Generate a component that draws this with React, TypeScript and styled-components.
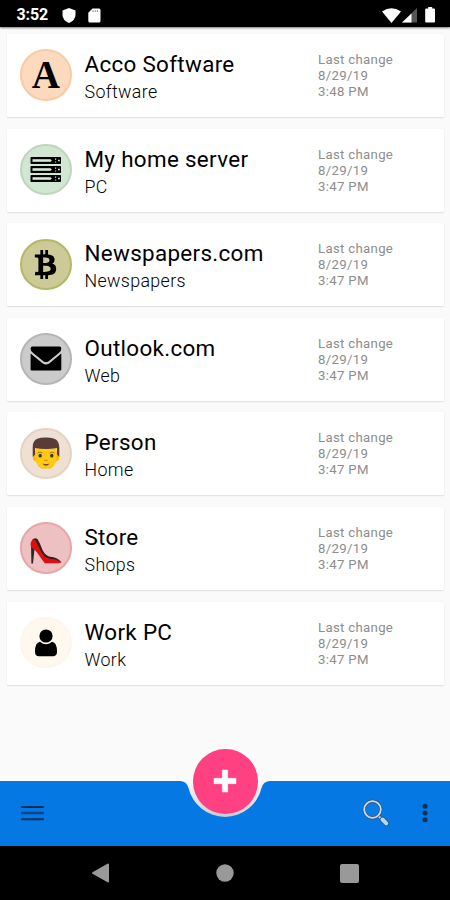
import React from "react";
import styled, { createGlobalStyle } from "styled-components";
import { FaBtc } from "react-icons/fa";

const GlobalStyle = createGlobalStyle`
  * { box-sizing: border-box; }
  html, body { margin: 0; padding: 0; background: #fafafa; }
  body { font-family: Roboto, "Liberation Sans", sans-serif; color: #000; }
`;

const Screen = styled.div`
  width: 450px;
  height: 900px;
  display: flex;
  flex-direction: column;
  background: #fafafa;
  overflow: hidden;
`;

const StatusBar = styled.header`
  height: 27px;
  flex: none;
  display: flex;
  align-items: center;
  padding: 3px 15px 0 16.5px;
  background: #000;
  color: #fff;
  box-shadow: 0 1px 2px rgba(0, 0, 0, 0.5);
`;

const Clock = styled.span`
  width: 45px;
  font-size: 16px;
  font-weight: 700;
  line-height: 18px;
  letter-spacing: -0.1px;
`;

const StatusIcons = styled.div<{ $right?: boolean }>`
  display: flex;
  align-items: center;
  gap: ${(p) => (p.$right ? "0" : "12px")};
  margin-left: ${(p) => (p.$right ? "auto" : "0")};
  svg { display: block; }
`;

const List = styled.main`
  flex: 1;
  min-height: 0;
  display: flex;
  flex-direction: column;
  gap: 11.6px;
  padding: 7px 6px 0 7.4px;
`;

const Card = styled.article`
  height: 83px;
  flex: none;
  display: flex;
  align-items: flex-start;
  padding-left: 12.8px;
  background: #fff;
  border-radius: 1px;
  box-shadow: 0 1px 1.5px rgba(0, 0, 0, 0.1), 0 0 1.5px rgba(0, 0, 0, 0.05);
`;

const Avatar = styled.div<{ $fill: string; $ring: string }>`
  width: 51.4px;
  height: 51.4px;
  flex: none;
  display: flex;
  align-items: center;
  justify-content: center;
  margin-top: 15.4px;
  border-radius: 50%;
  border: 2px solid ${(p) => p.$ring};
  background: ${(p) => p.$fill};
  svg { display: block; }
`;

const Letter = styled.span`
  padding-bottom: 1px;
  font: 700 39px/38px "Liberation Serif", serif;
`;

const Names = styled.div`
  width: 246.4px;
  flex: none;
  padding: 17px 0 0 12.9px;
`;

const Title = styled.h2`
  margin: 0;
  font-size: 22.4px;
  line-height: 27px;
  font-weight: 400;
  letter-spacing: 0.33px;
  white-space: nowrap;
`;

const Category = styled.p`
  margin: 1px 0 0;
  font-size: 17.8px;
  line-height: 25px;
  font-weight: 300;
  letter-spacing: 0.37px;
  color: #000;
`;

const Changed = styled.div`
  padding-top: 18px;
  font-size: 13.2px;
  line-height: 16px;
  letter-spacing: 0.32px;
  color: #8d8d8d;
  white-space: pre-line;
`;

const BottomBar = styled.footer`
  position: relative;
  height: 65px;
  flex: none;
  display: flex;
  align-items: center;
  padding: 0 22px 1px 21px;
  background: #0578e4;
  svg { display: block; }
`;

const IconButton = styled.button<{ $push?: boolean; $gap?: number }>`
  display: flex;
  padding: 0;
  border: 0;
  background: none;
  margin-left: ${(p) => (p.$push ? "auto" : `${p.$gap ?? 0}px`)};
`;

const Cradle = styled.div`
  position: absolute;
  left: 177px;
  top: -1px;
`;

const AddButton = styled.button`
  position: absolute;
  left: 193px;
  top: -32px;
  width: 64.5px;
  height: 64.5px;
  display: flex;
  align-items: center;
  justify-content: center;
  padding: 0;
  border: 0;
  border-radius: 50%;
  background: #ff4081;
`;

const NavBar = styled.nav`
  height: 54px;
  flex: none;
  display: flex;
  align-items: center;
  justify-content: space-between;
  padding: 0 91px;
  background: #000;
  svg { display: block; }
`;

const ServerIcon = () => (
  <svg width="32" height="26" viewBox="0 0 32 26">
    {[0, 9, 18].map((y) => (
      <g key={y} transform={`translate(0 ${y})`}>
        <rect x="0.5" y="0" width="30.500" height="7" rx="0.7" fill="#000" />
        <rect x="2.5" y="2.2" width="18" height="2.6" fill="#d5e9d3" />
        <path d="M20 2.200l2 1.300-2 1.300zM25 1.600h1.200v1.200H25zM25 4.400h1.200v1.200H25zM28 2.800h1.800v1.500H28z" fill="#d5e9d3" />
      </g>
    ))}
  </svg>
);

const MailIcon = () => (
  <svg width="32" height="25" viewBox="0 0 32 25">
    <path d="M2.500 0.500h27Q31.300.500 31.300 2.700 31.300 5.300 28.800 7.100L18.600 15.200Q16 17 13.400 15.200L3.200 7.100Q.600 5.200.600 2.700.600.500 2.500.500z" />
    <path d="M.600 7.600l12.200 9.900q3.200 2.200 6.400 0l12.100-9.900v15.900q0 1-1 1H1.600q-1 0-1-1z" />
  </svg>
);

const FaceIcon = () => (
  <svg width="28" height="32" viewBox="0 0 28 32">
    <path d="M1 14h26v8.500q-1 1.500-3 2Q22.500 29 18.500 31.500h-9Q5.500 29 4 24.500q-2-.5-3-2z" fill="#fdb900" />
    <path d="M3.500 9h21v14q-1.500 5-6 7.500h-9Q5 28 3.500 23z" fill="#ffcb16" />
    <path d="M.7 20V9.500Q1 3 6 1.500 8.500.3 14 .4q6-.2 9 1.600 4 2 4.300 8V20l-2.300-2.500V11q-11 1.800-22 0v6.500z" fill="#593b38" />
    <path d="M5.500 16q2.500-2 5 0M17.500 16q2.500-2 5 0" fill="none" stroke="#a3761f" strokeWidth="1" />
    <ellipse cx="8.200" cy="18.700" rx="1.700" ry="1.900" fill="#40312c" />
    <ellipse cx="19.800" cy="18.700" rx="1.700" ry="1.900" fill="#40312c" />
    <path d="M12.500 23q1.500 1 3 0" fill="none" stroke="#e08d00" strokeWidth="1.200" />
    <path d="M10.500 26.600q3.500 1 7 0-1.100 2.200-3.500 2.200t-3.500-2.200z" fill="#795022" />
  </svg>
);

const ShoeIcon = () => (
  <svg width="32" height="31" viewBox="0 0 32 31">
    <path d="M1 12.500L4.500 16 3 30.500H1.400z" fill="#302626" />
    <path d="M2 7Q4.500 4 7.500 6 10.500 11 12.500 17q3 6.500 9.500 7 5 .500 9.500 5.200L27 29.500 14 24 5 10z" fill="#302020" />
    <path d="M.700 13Q0 8.500 3 6.500 5.500 6 6.500 9.500L11.500 19.500Q14.500 25.500 20 25.800q6 0 11.300 3.300-1 1.100-3 1.100H14.800Q11 25.500 8.500 21.500 5 16.500 3.200 16z" fill="#e10c10" />
  </svg>
);

const UserIcon = () => (
  <svg width="24" height="28" viewBox="0 0 24 28">
    <circle cx="12" cy="7" r="6.600" />
    <path d="M6 12.700Q12 18 18 12.700 23 13.500 23 22.500q0 4.800-4 4.800H5q-4 0-4-4.800 0-9 5-9.800z" />
  </svg>
);

interface Entry {
  title: string;
  category: string;
  time: string;
  fill: string;
  ring: string;
  icon: React.ReactNode;
}

const entries: Entry[] = [
  { title: "Acco Software", category: "Software", time: "3:48 PM", fill: "#fdd9bd", ring: "#f8cba6", icon: <Letter>A</Letter> },
  { title: "My home server", category: "PC", time: "3:47 PM", fill: "#d2e7d1", ring: "#bed6be", icon: <ServerIcon /> },
  { title: "Newspapers.com", category: "Newspapers", time: "3:47 PM", fill: "#cccb98", ring: "#b4b767", icon: <FaBtc size={29} /> },
  { title: "Outlook.com", category: "Web", time: "3:47 PM", fill: "#cbcbcb", ring: "#b5b5b5", icon: <MailIcon /> },
  { title: "Person", category: "Home", time: "3:47 PM", fill: "#eee1d4", ring: "#e5d3c1", icon: <FaceIcon /> },
  { title: "Store", category: "Shops", time: "3:47 PM", fill: "#edc0c1", ring: "#e6a6a8", icon: <ShoeIcon /> },
  { title: "Work PC", category: "Work", time: "3:47 PM", fill: "#fef8ee", ring: "#fdf6eb", icon: <UserIcon /> },
];

export default function App() {
  return (
    <Screen>
      <GlobalStyle />
      <StatusBar>
        <Clock>3:52</Clock>
        <StatusIcons>
          <svg width="14" height="15" viewBox="0 0 14 15">
            <path d="M7 0l6.500 2.500V7q0 5-6.500 8Q.5 12 .5 7V2.500z" fill="#fff" />
          </svg>
          <svg width="13" height="15" viewBox="0 0 13 15">
            <path d="M4.500.5H11q1.500 0 1.500 1.500v11q0 1.500-1.500 1.500H1.800Q.3 14.500.3 13V4.700z" fill="#fff" />
            <path d="M5 2.300v1.600M7.200 2.300v1.600M9.400 2.300v1.600" stroke="#777" strokeWidth="1" />
          </svg>
        </StatusIcons>
        <StatusIcons $right>
          <svg width="19" height="15" viewBox="0 0 19 15">
            <path d="M0 3.500q9.500-6.500 19 0L9.500 15z" fill="#fff" />
          </svg>
          <svg width="17" height="15" viewBox="0 0 17 15">
            <path d="M16 0v14.500H1z" fill="#555" />
            <path d="M10.500 5.500v9H1z" fill="#fff" />
          </svg>
          <svg width="17" height="16" viewBox="0 0 17 16">
            <path d="M10.200 0h4v1.500H16q1 0 1 1v12q0 1-1 1H8.200q-1 0-1-1v-12q0-1 1-1h2z" fill="#fff" />
          </svg>
        </StatusIcons>
      </StatusBar>
      <List>
        {entries.map((e) => (
          <Card key={e.title}>
            <Avatar $fill={e.fill} $ring={e.ring}>{e.icon}</Avatar>
            <Names>
              <Title>{e.title}</Title>
              <Category>{e.category}</Category>
            </Names>
            <Changed>{`Last change\n8/29/19\n${e.time}`}</Changed>
          </Card>
        ))}
      </List>
      <BottomBar>
        <IconButton aria-label="Menu">
          <svg width="23" height="16" viewBox="0 0 23 16">
            <path d="M1 2h21M1 14.200h21" stroke="#0b2f57" strokeWidth="2" strokeLinecap="round" />
            <path d="M1 8h21" stroke="#07478a" strokeWidth="2.400" strokeLinecap="round" />
          </svg>
        </IconButton>
        <Cradle>
          <svg width="96" height="42" viewBox="0 0 96 42">
            <defs>
              <linearGradient id="cradle" x1="0" y1="0" x2="0" y2="1">
                <stop offset="0" stopColor="#fafafa" />
                <stop offset="0.3" stopColor="#eeeef0" />
                <stop offset="0.85" stopColor="#d3d5d9" />
                <stop offset="1" stopColor="#c3cad3" />
              </linearGradient>
            </defs>
            <path d="M3 0V1Q9.500 1 11.500 8A37.500 37.500 0 0 0 84.500 8Q86.500 1 93 1V0z" fill="url(#cradle)" />
          </svg>
        </Cradle>
        <AddButton aria-label="Add">
          <svg width="24" height="24" viewBox="0 0 24 24">
            <path d="M9.300 1h5.400v8.300H23v5.400h-8.300V23H9.300v-8.300H1V9.300h8.300z" fill="#fff" stroke="#fff" strokeWidth="0.500" strokeLinejoin="round" />
          </svg>
        </AddButton>
        <IconButton aria-label="Search" $push>
          <svg width="28" height="28" viewBox="0 0 28 28">
            <path d="M16.500 17l4 4" stroke="#31577e" strokeWidth="3.500" />
            <path d="M16.500 17l4 4" stroke="#c3dcf0" strokeWidth="2" />
            <path d="M20.500 20.500l4 4" stroke="#31577e" strokeWidth="5.600" strokeLinecap="round" />
            <path d="M20.500 20.500l3.800 3.800" stroke="#a9daf8" strokeWidth="4" strokeLinecap="round" />
            <circle cx="10.500" cy="10.500" r="8.300" fill="#0d7ce2" stroke="#31577e" strokeWidth="3.400" />
            <circle cx="10.500" cy="10.500" r="8.300" fill="none" stroke="#c8d9e8" strokeWidth="1.800" />
          </svg>
        </IconButton>
        <IconButton aria-label="More options" $gap={32}>
          <svg width="6" height="20" viewBox="0 0 6 20">
            <g fill="#0b325c">
              <circle cx="3" cy="3.200" r="2.500" />
              <circle cx="3" cy="10" r="2.500" />
              <circle cx="3" cy="16.800" r="2.500" />
            </g>
          </svg>
        </IconButton>
      </BottomBar>
      <NavBar>
        <svg width="19" height="20" viewBox="0 0 19 20">
          <path d="M17 1.500v17L2 10z" fill="#999" stroke="#999" strokeWidth="2" strokeLinejoin="round" />
        </svg>
        <svg width="18" height="18" viewBox="0 0 18 18">
          <circle cx="9" cy="9" r="8.700" fill="#999" />
        </svg>
        <svg width="19" height="19" viewBox="0 0 19 19">
          <rect width="19" height="19" rx="2" fill="#999" />
        </svg>
      </NavBar>
    </Screen>
  );
}
